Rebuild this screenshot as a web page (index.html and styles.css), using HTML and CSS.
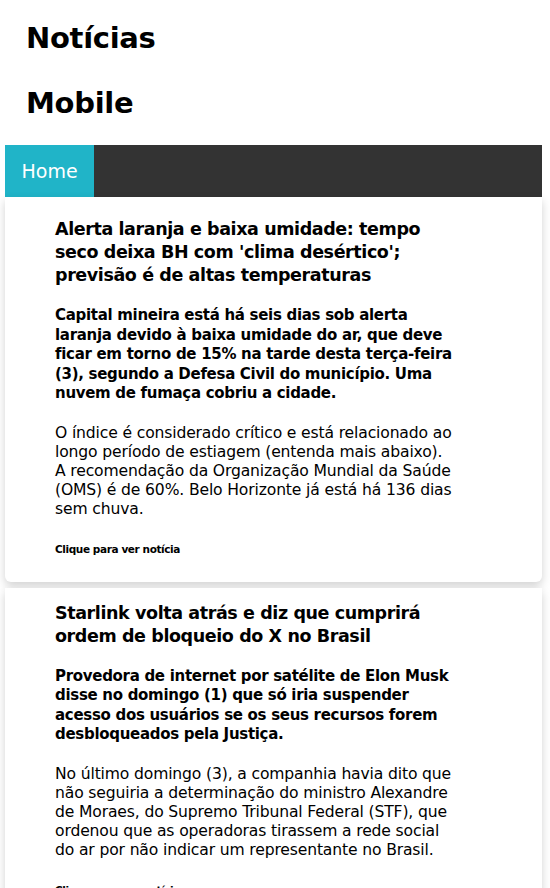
FILE: index.html
```html
<!DOCTYPE html>
<html lang="pt-BR">
<head>
<meta charset="utf-8">
<title>Notícias Mobile</title>
<link rel="stylesheet" href="styles.css">
</head>
<body>
<div class="page">
  <header class="site-header">
    <h1 class="brand"><span class="brand-line">Notícias</span><span class="brand-line">Mobile</span></h1>
  </header>
  <nav class="nav">
    <a class="nav-item active" href="#">Home</a>
  </nav>
  <main class="feed">
    <article class="card">
      <div class="card-body">
        <h2 class="card-title">Alerta laranja e baixa umidade: tempo<br>seco deixa BH com 'clima desértico';<br>previsão é de altas temperaturas</h2>
        <p class="card-lead">Capital mineira está há seis dias sob alerta<br>laranja devido à baixa umidade do ar, que deve<br>ficar em torno de 15% na tarde desta terça-feira<br>(3), segundo a Defesa Civil do município. Uma<br>nuvem de fumaça cobriu a cidade.</p>
        <p class="card-text">O índice é considerado crítico e está relacionado ao<br>longo período de estiagem (entenda mais abaixo).<br>A recomendação da Organização Mundial da Saúde<br>(OMS) é de 60%. Belo Horizonte já está há 136 dias<br>sem chuva.</p>
        <a class="card-link" href="#">Clique para ver notícia</a>
      </div>
    </article>
    <article class="card">
      <div class="card-body">
        <h2 class="card-title">Starlink volta atrás e diz que cumprirá<br>ordem de bloqueio do X no Brasil</h2>
        <p class="card-lead">Provedora de internet por satélite de Elon Musk<br>disse no domingo (1) que só iria suspender<br>acesso dos usuários se os seus recursos forem<br>desbloqueados pela Justiça.</p>
        <p class="card-text">No último domingo (3), a companhia havia dito que<br>não seguiria a determinação do ministro Alexandre<br>de Moraes, do Supremo Tribunal Federal (STF), que<br>ordenou que as operadoras tirassem a rede social<br>do ar por não indicar um representante no Brasil.</p>
        <a class="card-link" href="#">Clique para ver notícia</a>
      </div>
    </article>
  </main>
</div>
</body>
</html>
```
FILE: styles.css
```css
* { box-sizing: border-box; }
html, body { margin: 0; padding: 0; background: #fff; }
body {
  font-family: "DejaVu Sans", Verdana, sans-serif;
  color: #000;
}
.page {
  width: 537px;
  margin-left: 5px;
}
.site-header {
  padding: 20px 0 0 21px;
  height: 145px;
}
.brand {
  margin: 0;
  font-size: 29px;
  letter-spacing: -0.3px;
  font-weight: bold;
  display: flex;
  flex-direction: column;
  gap: 28px;
  line-height: 37px;
}
.nav {
  display: flex;
  background: #333;
  height: 52px;
}
.nav-item {
  display: flex;
  align-items: center;
  padding: 0 16.5px;
  background: #20b4c8;
  color: #fff;
  text-decoration: none;
  font-size: 19px;
}
.feed {
  display: flex;
  flex-direction: column;
  gap: 6px;
}
.card {
  background: #fff;
  border-radius: 0 0 6px 6px;
  box-shadow: 0 4px 10px rgba(0,0,0,0.18);
}
.card-body {
  padding: 14px 40px 26px 50px;
}
.card:first-child .card-body {
  padding-top: 21px;
}
.card-title {
  margin: 0 0 19px;
  font-size: 17.5px;
  letter-spacing: -0.4px;
  font-weight: bold;
  line-height: 23px;
}
.card-lead {
  margin: 0 0 20px;
  font-size: 15px;
  letter-spacing: -0.3px;
  font-weight: bold;
  line-height: 19.5px;
}
.card-text {
  margin: 0 0 24px;
  font-size: 15.6px;
  letter-spacing: -0.15px;
  line-height: 19px;
}
.card-link {
  display: block;
  font-size: 10.5px;
  letter-spacing: -0.4px;
  line-height: 13px;
  font-weight: bold;
  color: #000;
  text-decoration: none;
}
```
